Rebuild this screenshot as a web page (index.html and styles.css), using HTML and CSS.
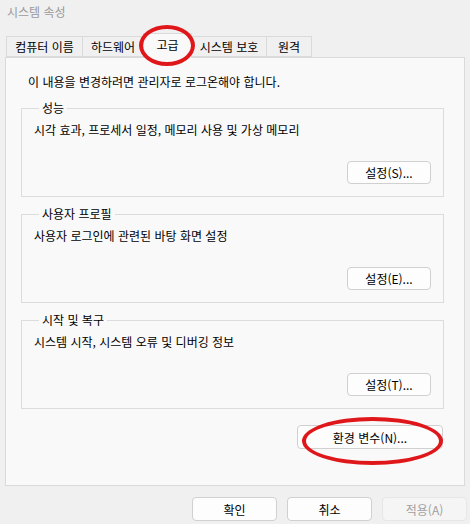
FILE: index.html
```html
<!DOCTYPE html>
<html lang="ko">
<head>
    <meta charset="UTF-8">
    <title>시스템 속성</title>
    <link rel="stylesheet" href="styles.css">
</head>
<body>
<div class="window">
    <div class="titlebar">시스템 속성</div>

    <div class="tabs">
        <div class="tab tab-name">컴퓨터 이름</div>
        <div class="tab tab-hw">하드웨어</div>
        <div class="tab tab-adv active">고급</div>
        <div class="tab tab-prot">시스템 보호</div>
        <div class="tab tab-remote">원격</div>
    </div>

    <div class="panel">
        <p class="intro">이 내용을 변경하려면 관리자로 로그온해야 합니다.</p>

        <fieldset class="group">
            <legend>성능</legend>
            <p class="desc">시각 효과, 프로세서 일정, 메모리 사용 및 가상 메모리</p>
            <div class="group-actions"><button class="btn">설정(S)...</button></div>
        </fieldset>

        <fieldset class="group">
            <legend>사용자 프로필</legend>
            <p class="desc">사용자 로그인에 관련된 바탕 화면 설정</p>
            <div class="group-actions"><button class="btn">설정(E)...</button></div>
        </fieldset>

        <fieldset class="group">
            <legend>시작 및 복구</legend>
            <p class="desc">시스템 시작, 시스템 오류 및 디버깅 정보</p>
            <div class="group-actions"><button class="btn">설정(T)...</button></div>
        </fieldset>

        <div class="env-row">
            <button class="btn btn-env">환경 변수(N)...</button>
        </div>
    </div>

    <div class="footer">
        <button class="btn btn-dialog">확인</button>
        <button class="btn btn-dialog">취소</button>
        <button class="btn btn-dialog" disabled>적용(A)</button>
    </div>

    <!-- annotation circles drawn over the dialog -->
    <div class="mark mark-tab"></div>
    <div class="mark mark-env"></div>
</div>
</body>
</html>
```

FILE: styles.css
```css
body {
    margin: 0;
    background-color: #f0f0f0;
    font-family: 'Noto Sans CJK KR', 'Noto Sans', sans-serif;
    font-size: 12px;
    color: #000;
}

.window {
    position: relative;
    width: 470px;
    height: 524px;
}

.titlebar {
    height: 37px;
    padding-left: 7px;
    line-height: 24px;
    color: #9a9a9a;
}

.tabs {
    display: flex;
    align-items: flex-end;
    height: 20px;
    margin-left: 6px;
    position: relative;
    z-index: 1;
}

.tab {
    box-sizing: border-box;
    height: 21px;
    line-height: 19px;
    border: 1px solid #dadada;
    border-right: none;
    background-color: #f0f0f0;
    text-align: center;
}

.tab-name { width: 76px; }
.tab-hw { width: 61px; }
.tab-adv { width: 49px; }
.tab-prot { width: 74px; }
.tab-remote { width: 46px; border-right: 1px solid #dadada; }

.tab.active {
    height: 25px;
    margin-bottom: -1px;
    line-height: 22px;
    background-color: #f9f9f9;
    border-right: 1px solid #dadada;
    border-bottom: none;
}

.tab.active + .tab {
    border-left: none;
}

.panel {
    box-sizing: border-box;
    height: 429px;
    margin: 0 5px;
    padding: 14px 20px 0 15px;
    border: 1px solid #dadada;
    background-color: #f9f9f9;
}

.intro {
    margin: 0 0 0 7px;
    line-height: 20px;
}

.group {
    margin: 0 0 9px 0;
    padding: 0 0 12px 12px;
    border: 1px solid #dcdcdc;
    min-width: 0;
}

.group:first-of-type {
    margin-top: 8px;
}

.group legend {
    margin-left: 5px;
    padding: 0 3px;
    line-height: 16px;
}

.desc {
    margin: 4px 0 0 0;
    line-height: 20px;
}

.group-actions {
    display: flex;
    justify-content: flex-end;
    margin-top: 21px;
    padding-right: 12px;
}

.btn {
    box-sizing: border-box;
    height: 23px;
    padding: 0;
    border: 1px solid #d0d0d0;
    border-radius: 4px;
    background-color: #fdfdfd;
    font-family: inherit;
    font-size: 12px;
    color: #000;
}

.group .btn {
    width: 84px;
}

.env-row {
    display: flex;
    justify-content: flex-end;
    margin-top: 16px;
    padding-right: 1px;
}

.btn-env {
    width: 146px;
    height: 24px;
}

.footer {
    display: flex;
    justify-content: flex-end;
    gap: 10px;
    padding: 11px 3px 0 0;
}

.btn-dialog {
    width: 85px;
    height: 24px;
}

.btn-dialog:disabled {
    background-color: #f5f5f5;
    border-color: #e6e6e6;
    color: #a0a0a0;
}

.mark {
    position: absolute;
    box-sizing: border-box;
    border: 4px solid #e0171a;
    border-radius: 50%;
    z-index: 2;
}

.mark-tab {
    left: 139px;
    top: 25px;
    width: 56px;
    height: 41px;
}

.mark-env {
    left: 302px;
    top: 417px;
    width: 141px;
    height: 48px;
}
```
